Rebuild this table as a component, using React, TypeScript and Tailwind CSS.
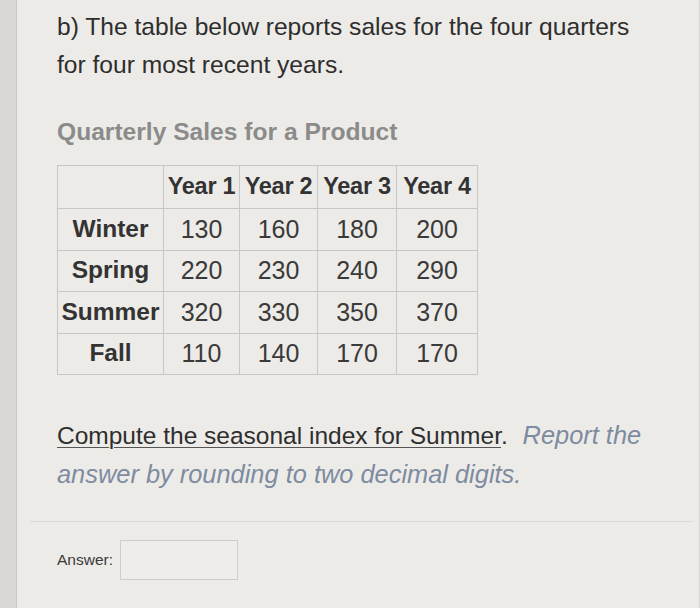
const rows = [
  { season: 'Winter', values: [130, 160, 180, 200] },
  { season: 'Spring', values: [220, 230, 240, 290] },
  { season: 'Summer', values: [320, 330, 350, 370] },
  { season: 'Fall', values: [110, 140, 170, 170] },
];

const years = ['Year 1', 'Year 2', 'Year 3', 'Year 4'];

export default function App() {
  return (
    <div className="flex h-[608px] w-[700px] overflow-hidden bg-[#edebe7] font-['Liberation_Sans',Arial,sans-serif] text-[#2e2e2e]">
      <div className="w-[17px] shrink-0 border-r border-[#c9c7c3] bg-[#dad8d4]" />

      <div className="flex flex-1 flex-col border-r border-[#d8d6d2] pt-[8px]">
        <div className="pl-[40px] pr-2">
          <p className="whitespace-nowrap text-[24.6px] leading-[38px]">
            b) The table below reports sales for the four quarters
            <br />
            for four most recent years.
          </p>

          <h2 className="mt-[33px] text-[24.6px] font-bold leading-[30px] text-[#8b8b8b]">
            Quarterly Sales for a Product
          </h2>

          <table className="mt-[18px] w-[420px] table-fixed border-collapse border border-[#b5b5b5]">
            <colgroup>
              <col className="w-[106px]" />
              <col className="w-[76px]" />
              <col className="w-[78px]" />
              <col className="w-[79px]" />
              <col className="w-[81px]" />
            </colgroup>
            <thead>
              <tr className="h-[43px]">
                <th className="border border-[#c6c6c6]" />
                {years.map((year) => (
                  <th
                    key={year}
                    className="whitespace-nowrap border border-[#c6c6c6] p-0 text-[23.5px] font-bold tracking-[-0.3px] text-[#333]"
                  >
                    {year}
                  </th>
                ))}
              </tr>
            </thead>
            <tbody>
              {rows.map((row) => (
                <tr key={row.season} className="h-[41.5px]">
                  <td className="whitespace-nowrap border border-[#c6c6c6] p-0 text-center text-[24.5px] font-bold text-[#333]">
                    {row.season}
                  </td>
                  {row.values.map((value, i) => (
                    <td
                      key={i}
                      className="border border-[#c6c6c6] p-0 text-center text-[25px] text-[#3a3a3a]"
                    >
                      {value}
                    </td>
                  ))}
                </tr>
              ))}
            </tbody>
          </table>

          <p className="mt-[41px] whitespace-nowrap text-[24.5px] leading-[38px]">
            <span className="underline decoration-[#555] decoration-1 underline-offset-[3px]">
              Compute the seasonal index for Summer
            </span>
            .{'  '}
            <span className="ml-[8px] text-[25.4px] italic text-[#7d8ca0]">
              Report the
            </span>
            <br />
            <span className="text-[25.4px] italic text-[#7d8ca0]">
              answer by rounding to two decimal digits.
            </span>
          </p>
        </div>

        <div className="ml-[13px] mr-[6px] mt-[27px] border-t border-[#dcdad6]" />

        <div className="flex items-center gap-[7px] pl-[40px] pt-[18px]">
          <span className="text-[15.5px] text-[#3a3a3a]">Answer:</span>
          <div className="h-[40px] w-[118px] border border-[#cfcdca] bg-[#efede9]" />
        </div>
      </div>
    </div>
  );
}
